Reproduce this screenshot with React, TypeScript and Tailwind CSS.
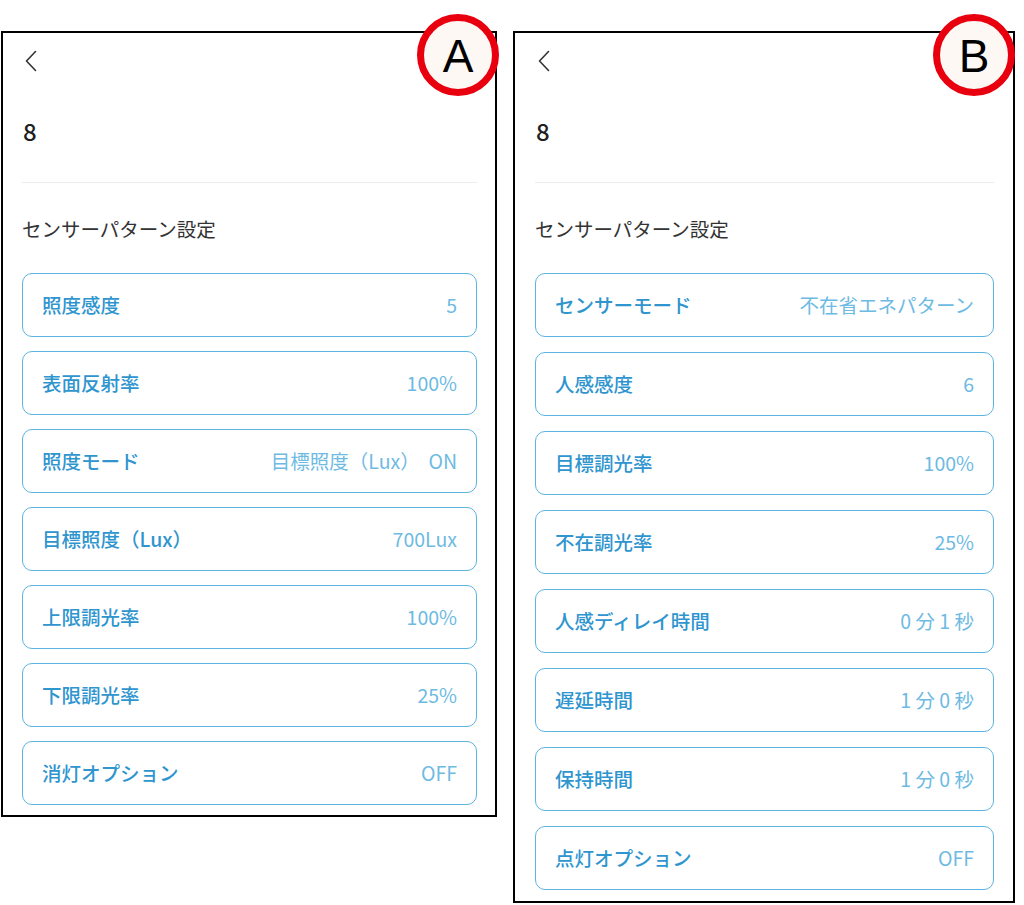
import React from "react";

type Row = { label: string; value: string };

const rowsA: Row[] = [
  { label: "照度感度", value: "5" },
  { label: "表面反射率", value: "100%" },
  { label: "照度モード", value: "目標照度（Lux）  ON" },
  { label: "目標照度（Lux）", value: "700Lux" },
  { label: "上限調光率", value: "100%" },
  { label: "下限調光率", value: "25%" },
  { label: "消灯オプション", value: "OFF" },
];

const rowsB: Row[] = [
  { label: "センサーモード", value: "不在省エネパターン" },
  { label: "人感感度", value: "6" },
  { label: "目標調光率", value: "100%" },
  { label: "不在調光率", value: "25%" },
  { label: "人感ディレイ時間", value: "0 分 1 秒" },
  { label: "遅延時間", value: "1 分 0 秒" },
  { label: "保持時間", value: "1 分 0 秒" },
  { label: "点灯オプション", value: "OFF" },
];

function Chevron() {
  return (
    <svg width="14" height="22" viewBox="0 0 14 22" fill="none" className="block">
      <polyline points="11.5,1.5 2.5,11 11.5,20.5" stroke="#333" strokeWidth="1.6" strokeLinecap="round" strokeLinejoin="round" />
    </svg>
  );
}

function SettingRow({ row }: { row: Row }) {
  return (
    <div className="h-[64px] flex items-center justify-between rounded-[10px] border-[1.5px] border-[#5db4e0] px-[19px]">
      <span className="text-[19.5px] font-medium text-[#2f95cf]">{row.label}</span>
      <span className="text-[19.5px] text-[#6dbae3] whitespace-pre">{row.value}</span>
    </div>
  );
}

function Panel({ rows, className, gapClass, padClass, pbClass }: { rows: Row[]; className: string; gapClass: string; padClass: string; pbClass: string }) {
  return (
    <div className={`${className} border-2 border-black bg-white flex flex-col ${padClass} ${pbClass}`}>
      <div className="mt-[17px] h-[22px] ml-[2px]">
        <Chevron />
      </div>
      <div className="mt-[39px] h-[40px] flex items-center text-[24px] text-[#1f1f1f] font-medium ml-[1px]">8</div>
      <div className="mt-[31px] h-px bg-[#ececec]"></div>
      <div className="mt-[26px] h-[40px] flex items-center text-[19.5px] text-[#333]">センサーパターン設定</div>
      <div className={`mt-[24px] flex flex-col ${gapClass}`}>
        {rows.map((r) => (
          <SettingRow key={r.label} row={r} />
        ))}
      </div>
    </div>
  );
}

function Badge({ letter, className }: { letter: string; className: string }) {
  return (
    <div className={`absolute ${className} w-[82px] h-[82px] rounded-full border-[7px] border-[#e8000f] bg-[#fdf8f4] flex items-center justify-center`}>
      <span className="text-[46px] leading-none text-black font-['Liberation_Sans',sans-serif] mt-[2px]">{letter}</span>
    </div>
  );
}

export default function App() {
  return (
    <div className="relative w-[1024px] h-[905px] bg-white overflow-hidden font-['Noto_Sans_CJK_JP','Noto_Sans',sans-serif]">
      <div className="flex items-start gap-[16px] pt-[31px] pl-[1px]">
        <Panel rows={rowsA} className="w-[496px]" gapClass="gap-[14px]" padClass="pl-[19px] pr-[18px]" pbClass="pb-[10px]" />
        <Panel rows={rowsB} className="w-[502px]" gapClass="gap-[15px]" padClass="pl-[20px] pr-[19px]" pbClass="pb-[11px]" />
      </div>
      <Badge letter="A" className="left-[417px] top-[14px]" />
      <Badge letter="B" className="left-[933px] top-[14px]" />
    </div>
  );
}
